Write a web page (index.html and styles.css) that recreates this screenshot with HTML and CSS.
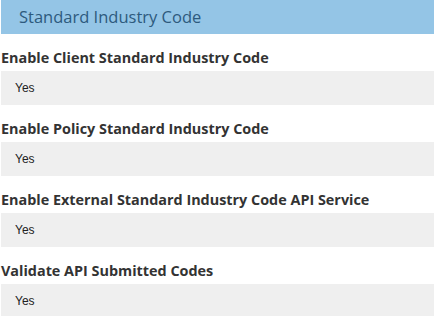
FILE: index.html
```html
<!DOCTYPE html>
<html lang="en">
  <head>
    <meta charset="UTF-8" />
    <title>Standard Industry Code</title>
    <link rel="stylesheet" href="styles.css">
  </head>
  <body>
    <div class="panel">
      <h2 class="panel-title">Standard Industry Code</h2>
      <div class="field">
        <label class="field-label">Enable Client Standard Industry Code</label>
        <div class="field-value">Yes</div>
      </div>
      <div class="field">
        <label class="field-label">Enable Policy Standard Industry Code</label>
        <div class="field-value">Yes</div>
      </div>
      <div class="field">
        <label class="field-label">Enable External Standard Industry Code API Service</label>
        <div class="field-value">Yes</div>
      </div>
      <div class="field">
        <label class="field-label">Validate API Submitted Codes</label>
        <div class="field-value">Yes</div>
      </div>
    </div>
  </body>
</html>
```

FILE: styles.css
```css
body {
  margin: 0;
  padding-left: 1px;
  background: #fff;
  font-family: "Open Sans", sans-serif;
}
.panel-title {
  margin: 0;
  height: 34px;
  padding-left: 18px;
  background: #94c5e6;
  color: #2d5a7d;
  font-size: 16.5px;
  font-weight: normal;
  line-height: 34px;
}
.field-label {
  display: block;
  padding: 14px 0 3px;
  color: #333;
  font-size: 14.4px;
  font-weight: bold;
  line-height: 20px;
}
.field-value {
  height: 34px;
  padding-left: 14px;
  background: #efefef;
  color: #222;
  font-family: "Liberation Sans", Arial, sans-serif;
  font-size: 12px;
  line-height: 34px;
}
```
